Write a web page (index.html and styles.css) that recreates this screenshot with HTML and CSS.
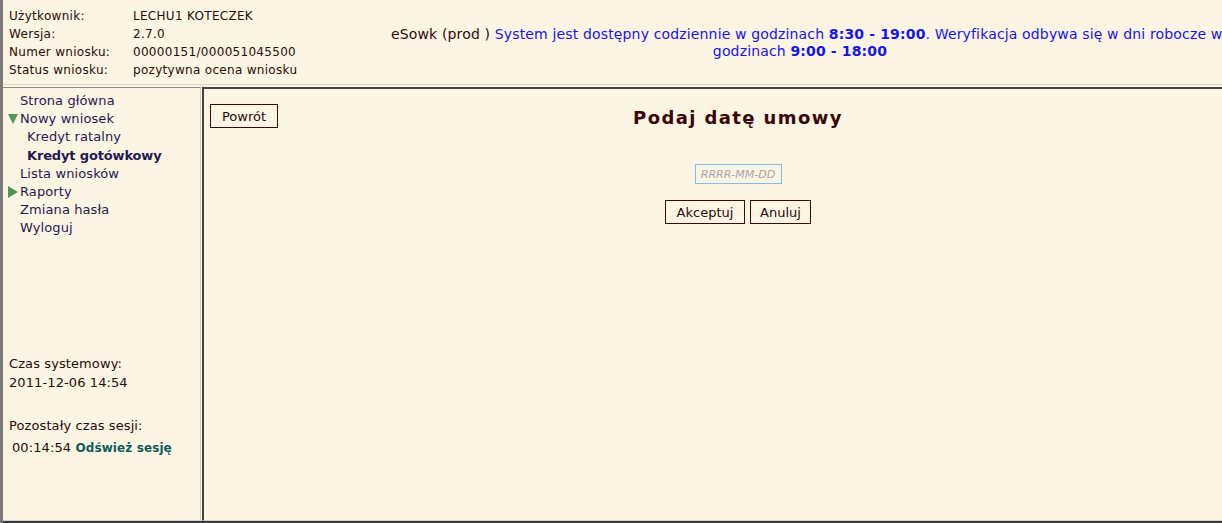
FILE: index.html
```html
<!DOCTYPE html>
<html lang="pl">
<head>
<meta charset="utf-8">
<title>eSowk</title>
<link rel="stylesheet" href="styles.css">
</head>
<body>
<div class="edge"></div>
<div class="app">
  <header class="header">
    <div class="info">
      <div class="row"><span class="lbl">Użytkownik:</span><span>LECHU1 KOTECZEK</span></div>
      <div class="row"><span class="lbl">Wersja:</span><span>2.7.0</span></div>
      <div class="row"><span class="lbl">Numer wniosku:</span><span>00000151/000051045500</span></div>
      <div class="row"><span class="lbl">Status wniosku:</span><span>pozytywna ocena wniosku</span></div>
    </div>
    <div class="notice">
      <div class="line">eSowk (prod ) <span class="blue">System jest dostępny codziennie w godzinach <b>8:30 - 19:00</b>. Weryfikacja odbywa się w dni robocze w</span></div>
      <div class="line blue">godzinach <b>9:00 - 18:00</b></div>
    </div>
  </header>
  <div class="frames">
    <nav class="menu">
      <ul class="nav">
        <li class="item">Strona główna</li>
        <li class="item open"><span class="tri down"></span>Nowy wniosek</li>
        <li class="item sub">Kredyt ratalny</li>
        <li class="item sub active">Kredyt gotówkowy</li>
        <li class="item">Lista wniosków</li>
        <li class="item closed"><span class="tri right"></span>Raporty</li>
        <li class="item">Zmiana hasła</li>
        <li class="item">Wyloguj</li>
      </ul>
      <div class="clock">
        <div>Czas systemowy:</div>
        <div>2011-12-06 14:54</div>
      </div>
      <div class="session">
        <div>Pozostały czas sesji:</div>
        <div class="remain">00:14:54 <span class="refresh">Odśwież sesję</span></div>
      </div>
    </nav>
    <main class="main">
      <div class="toolbar"><button class="btn back">Powrót</button></div>
      <div class="content">
        <h1 class="title">Podaj datę umowy</h1>
        <input class="date" type="text" placeholder="RRRR-MM-DD">
        <div class="actions">
          <button class="btn">Akceptuj</button>
          <button class="btn">Anuluj</button>
        </div>
      </div>
    </main>
  </div>
</div>
</body>
</html>
```

FILE: styles.css
```css
html, body {
  margin: 0;
  padding: 0;
  height: 100%;
}
body {
  display: flex;
  background: #fdf5e4;
  font-family: "DejaVu Sans", Verdana, sans-serif;
  font-size: 12px;
  color: #2a0a0a;
  overflow: hidden;
}
.edge {
  width: 3px;
  flex: none;
  background: #7c7b78;
}
.app {
  flex: 1;
  display: flex;
  flex-direction: column;
  border-bottom: 2px solid #3a3a3a;
  min-width: 0;
}
.header {
  height: 85px;
  display: flex;
  align-items: stretch;
  border-bottom: 1px solid #d6d0c6;
  box-sizing: border-box;
}
.info {
  width: 377px;
  flex: none;
  padding: 7px 0 0 6px;
  box-sizing: border-box;
  letter-spacing: 0.3px;
}
.row {
  display: flex;
  line-height: 18px;
  white-space: nowrap;
}
.lbl {
  width: 124px;
  flex: none;
}
.notice {
  width: 818px;
  flex: none;
  margin-left: 11px;
  padding-top: 26px;
  text-align: center;
  line-height: 17px;
  font-size: 14px;
  letter-spacing: 0.15px;
  color: #2a0a0a;
  white-space: nowrap;
}
.blue { color: #1414ee; }
.notice b { font-weight: bold; }
.frames {
  flex: 1;
  display: flex;
  margin-top: 2px;
}
.menu {
  width: 197px;
  flex: none;
  border-top: 1px solid #8e8a84;
  border-right: 1px solid #d6d0c6;
  border-bottom: 1px solid #d6d0c6;
  margin-right: 1px;
  padding-top: 4px;
  font-size: 13px;
  letter-spacing: 0.1px;
}
.nav {
  list-style: none;
  margin: 0;
  padding: 0;
  color: #1e1a52;
}
.item {
  position: relative;
  line-height: 18.2px;
  padding-left: 17px;
  white-space: nowrap;
}
.item.sub { padding-left: 24px; }
.item.active {
  font-weight: bold;
  letter-spacing: -0.15px;
}
.tri {
  position: absolute;
  left: 5px;
  top: 4px;
  width: 0;
  height: 0;
}
.tri.down {
  border-left: 5px solid transparent;
  border-right: 5px solid transparent;
  border-top: 10px solid #4f9a58;
}
.tri.right {
  top: 3px;
  border-top: 6px solid transparent;
  border-bottom: 6px solid transparent;
  border-left: 10px solid #4f9a58;
}
.clock {
  margin-top: 116px;
  padding-left: 6px;
  line-height: 19px;
}
.session {
  margin-top: 23px;
  padding-left: 6px;
  line-height: 22px;
}
.remain { padding-left: 3px; }
.refresh {
  color: #0d5c5a;
  font-weight: bold;
  font-size: 12px;
  letter-spacing: 0.1px;
}
.main {
  flex: 1;
  border-left: 2px solid #454340;
  border-top: 2px solid #454340;
  border-bottom: 1px solid #d6d0c6;
  padding: 15px 0 0 6px;
  display: flex;
  align-items: flex-start;
}
.toolbar { flex: none; }
.btn {
  font-family: "DejaVu Sans", Verdana, sans-serif;
  font-size: 13px;
  color: #2a0a0a;
  background: #fdf5e4;
  border: 1px solid #3a0a0a;
  height: 24px;
  padding: 0 6px;
  margin: 0;
  border-radius: 0;
}
.back { width: 68px; }
.content {
  flex: 1;
  display: flex;
  flex-direction: column;
  align-items: center;
  padding-right: 24px;
}
.title {
  margin: 4px 0 0;
  font-size: 18px;
  font-weight: bold;
  letter-spacing: 1.4px;
  color: #3a0505;
  line-height: 20px;
}
.date {
  margin-top: 36px;
  width: 87px;
  height: 20px;
  box-sizing: border-box;
  border: 1px solid #82bfe8;
  background: #fdf5e4;
  font-family: "DejaVu Sans", sans-serif;
  font-size: 11px;
  font-style: italic;
  padding: 0 2px;
  text-align: center;
}
.date::placeholder { color: #a7a7a7; }
.actions {
  margin-top: 16px;
  display: flex;
  gap: 5px;
}
.actions .btn:first-child { width: 80px; }
.actions .btn:last-child { width: 61px; }
```
